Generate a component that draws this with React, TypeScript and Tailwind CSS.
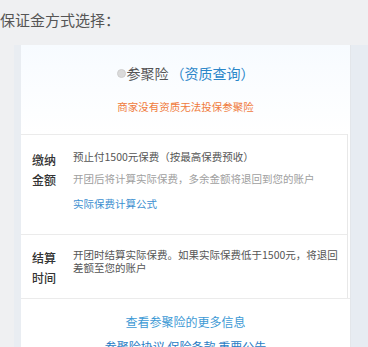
import { useState } from 'react'

const App = () => {
  const [checked, setChecked] = useState(false)

  return (
    <div
      className="w-[368px] h-[347px] overflow-hidden bg-[#eff0f2] text-[#333]"
      style={{ fontFamily: '"Noto Sans CJK SC", "Liberation Sans", sans-serif' }}
    >
      <div className="h-[45px] pt-[9px] text-[15px] leading-[22px] text-[#555]">保证金方式选择：</div>

      <div className="flex">
        <div className="w-[14px] shrink-0" />
        <div className="w-[7px] shrink-0 bg-[#e9edf2]" />
        <div className="w-[330px] shrink-0 bg-white border-r border-[#e3e6ea]">
          <div className="bg-gradient-to-b from-[#f7fbff] to-white pt-[18px]">
            <label className="flex items-center justify-center h-[20px] text-[14px] text-[#555] cursor-pointer">
              <input
                type="radio"
                checked={checked}
                onChange={() => setChecked(!checked)}
                className="appearance-none w-[9px] h-[9px] rounded-full bg-[#dadada] border border-[#cfcfcf] mr-[1px]"
              />
              <span>参聚险</span>
              <span className="text-[#2a86c9] ml-[2px]">（资质查询）</span>
            </label>
            <div className="mt-[17px] h-[34px] text-center text-[10.5px] leading-[14px] text-[#f07b3c]">
              商家没有资质无法投保参聚险
            </div>
          </div>

          <div className="mr-[2px] border-r border-[#e8e8e8]">
            <div className="flex border-t border-[#ebebeb] h-[100px] pt-[15px]">
              <div className="w-[52px] pl-[11px] text-[12px] leading-[20px] font-medium text-[#333]">
                <div>缴纳</div>
                <div>金额</div>
              </div>
              <div className="flex-1 text-[10.5px]">
                <div className="leading-[14px] text-[#555]">预止付1500元保费（按最高保费预收）</div>
                <div className="mt-[8px] leading-[14px] text-[#a0a0a0]">开团后将计算实际保费，多余金额将退回到您的账户</div>
                <div className="mt-[11px] leading-[14px] text-[#3c8fd0]">实际保费计算公式</div>
              </div>
            </div>

            <div className="flex border-t border-[#ebebeb] h-[64px] pt-[13px]">
              <div className="w-[52px] pl-[11px] text-[12px] leading-[20px] font-medium text-[#333]">
                <div>结算</div>
                <div>时间</div>
              </div>
              <div className="w-[266px] text-[10.5px] leading-[13px] text-[#555]">
                开团时结算实际保费。如果实际保费低于1500元，将退回差额至您的账户
              </div>
            </div>
          </div>

          <div className="border-t border-[#ebebeb] pt-[14px] text-center">
            <div className="text-[12px] leading-[17px] text-[#3d9ad5]">查看参聚险的更多信息</div>
            <div className="mt-[8px] text-[12px] leading-[17px] text-[#2a7cc4]">参聚险协议 保险条款 重要公告</div>
          </div>
        </div>
        <div className="w-[17px] shrink-0 bg-[#e7ecf2]" />
      </div>
    </div>
  )
}

export default App
